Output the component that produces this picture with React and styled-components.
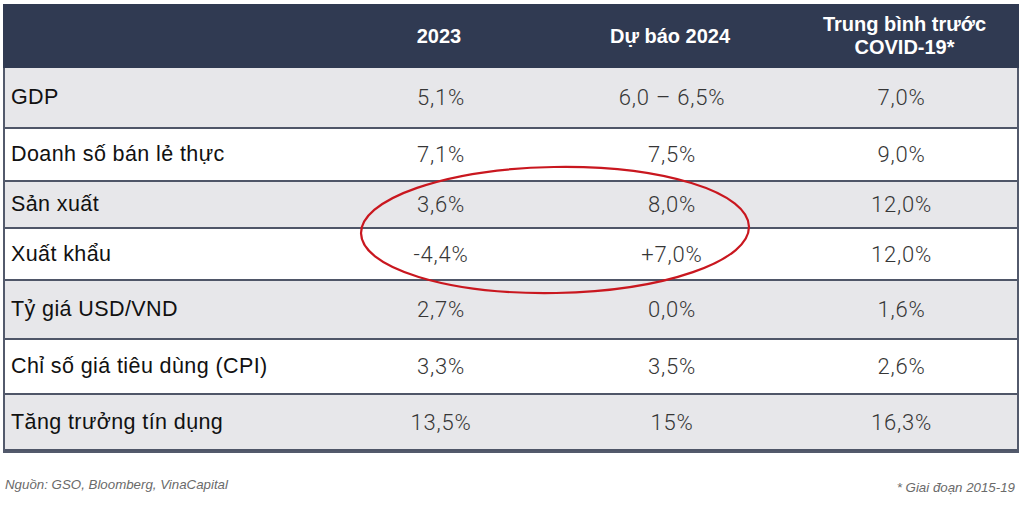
import React from 'react';
import styled, { createGlobalStyle } from 'styled-components';

const GlobalStyle = createGlobalStyle`
  body {
    margin: 0;
    background: #ffffff;
    font-family: "Liberation Sans", Arial, sans-serif;
  }
`;

const columns = '325px 222px 240px 1fr';

const Page = styled.div`
  position: relative;
  width: 1024px;
  height: 507px;
  padding: 4px 5px 0 3px;
  box-sizing: border-box;
`;

const Table = styled.div`
  border: 2px solid #535a6c;
  border-top: none;
  display: flex;
  flex-direction: column;
`;

const HeadRow = styled.div`
  display: grid;
  grid-template-columns: ${columns};
  height: 64px;
  background: #303a52;
  color: #ffffff;
  align-items: center;
  margin: 0 -2px;
`;

const HeadCell = styled.div`
  text-align: center;
  font-weight: 700;
  font-size: 20px;
  line-height: 23px;
  padding-right: ${(p) => p.$shift || 0}px;
`;

const Row = styled.div`
  display: grid;
  grid-template-columns: ${columns};
  height: ${(p) => p.$h}px;
  box-sizing: border-box;
  align-items: center;
  background: ${(p) => (p.$shade ? '#e7e7ea' : '#ffffff')};
  border-top: ${(p) => (p.$first ? 'none' : '2px solid #4f5668')};
  border-bottom: ${(p) => (p.$last ? '2px solid #4f5668' : 'none')};
`;

const Label = styled.div`
  padding-left: 6px;
  font-size: 21.5px;
  letter-spacing: 0.4px;
  color: #111111;
`;

const Value = styled.div`
  text-align: center;
  font-family: Roboto, "Liberation Sans", sans-serif;
  font-weight: 300;
  font-size: 22px;
  letter-spacing: 0.8px;
  color: #363636;
  padding-right: ${(p) => p.$shift || 0}px;
`;

const Footer = styled.div`
  display: flex;
  justify-content: space-between;
  align-items: flex-end;
  padding: 27px 4px 0 2px;
  font-style: italic;
  font-size: 13.3px;
  color: #6a6a6a;
`;

const Note = styled.span`
  position: relative;
  top: ${(p) => p.$down || 0}px;
`;

const Circle = styled.svg`
  position: absolute;
  left: 350px;
  top: 158px;
  pointer-events: none;
`;

const rows = [
  { label: 'GDP', v: ['5,1%', '6,0 – 6,5%', '7,0%'], h: 59, shade: true },
  { label: 'Doanh số bán lẻ thực', v: ['7,1%', '7,5%', '9,0%'], h: 53 },
  { label: 'Sản xuất', v: ['3,6%', '8,0%', '12,0%'], h: 47, shade: true },
  { label: 'Xuất khẩu', v: ['-4,4%', '+7,0%', '12,0%'], h: 52 },
  { label: 'Tỷ giá USD/VND', v: ['2,7%', '0,0%', '1,6%'], h: 59, shade: true },
  { label: 'Chỉ số giá tiêu dùng (CPI)', v: ['3,3%', '3,5%', '2,6%'], h: 55 },
  { label: 'Tăng trưởng tín dụng', v: ['13,5%', '15%', '16,3%'], h: 58, shade: true },
];

export default function App() {
  return (
    <Page>
      <GlobalStyle />
      <Table>
        <HeadRow>
          <div />
          <HeadCell>2023</HeadCell>
          <HeadCell>Dự báo 2024</HeadCell>
          <HeadCell $shift={0}>
            Trung bình trước
            <br />
            COVID-19*
          </HeadCell>
        </HeadRow>
        {rows.map((r, i) => (
          <Row
            key={r.label}
            $h={r.h}
            $shade={r.shade}
            $first={i === 0}
            $last={i === rows.length - 1}
          >
            <Label>{r.label}</Label>
            <Value>{r.v[0]}</Value>
            <Value>{r.v[1]}</Value>
            <Value $shift={6}>{r.v[2]}</Value>
          </Row>
        ))}
      </Table>
      <Footer>
        <Note $down={-3}>Nguồn: GSO, Bloomberg, VinaCapital</Note>
        <Note>* Giai đoạn 2015-19</Note>
      </Footer>
      <Circle width="420" height="150" viewBox="0 0 420 150">
        <ellipse
          cx="205"
          cy="72"
          rx="194"
          ry="63"
          fill="none"
          stroke="#c9171f"
          strokeWidth="2.2"
          transform="rotate(-1 205 72)"
        />
      </Circle>
    </Page>
  );
}
